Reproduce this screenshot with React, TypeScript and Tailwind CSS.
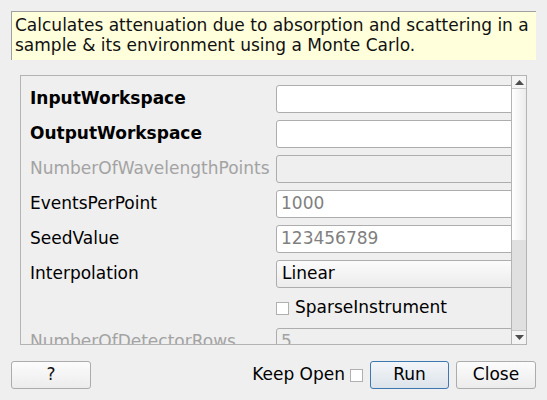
export default function App() {
  const rows: { label: string; kind: "bold" | "normal" | "disabled"; input: "text" | "disabled" | "combo"; value?: string; placeholder?: boolean }[] = [
    { label: "InputWorkspace", kind: "bold", input: "text" },
    { label: "OutputWorkspace", kind: "bold", input: "text" },
    { label: "NumberOfWavelengthPoints", kind: "disabled", input: "disabled" },
    { label: "EventsPerPoint", kind: "normal", input: "text", value: "1000", placeholder: true },
    { label: "SeedValue", kind: "normal", input: "text", value: "123456789", placeholder: true },
    { label: "Interpolation", kind: "normal", input: "combo", value: "Linear" },
  ]

  const labelClass = {
    bold: "font-bold text-black",
    normal: "text-black",
    disabled: "text-[#a3a3a3]",
  }

  return (
    <div className="w-[547px] h-[400px] bg-[#efefef] font-['DejaVu_Sans',sans-serif] text-[17px] text-black pt-[11px] pl-[11px] flex flex-col overflow-hidden">
      {/* description tooltip */}
      <div className="w-[525px] h-[49px] border-l border-t border-[#a0a0a0] bg-[#ffffdc] pl-[3px] pt-[3px] leading-[20px] whitespace-nowrap text-[#111]">
        Calculates attenuation due to absorption and scattering in a
        <br />
        sample &amp; its environment using a Monte Carlo.
      </div>

      {/* property scroll area */}
      <div className="mt-[15px] ml-[9px] w-[507px] h-[270px] border border-[#b4b4b4] flex">
        <div className="flex-1 overflow-hidden pl-[9px] pt-[9px]">
          <div className="grid grid-cols-[246px_260px] gap-y-[7px]">
            {rows.map((row) => (
              <div key={row.label} className="contents">
                <div className={`h-[28px] flex items-center ${labelClass[row.kind]}`}>{row.label}</div>
                {row.input === "combo" ? (
                  <div className="h-[28px] rounded-[3px] border border-[#adadad] bg-gradient-to-b from-[#fbfbfb] to-[#ececec] flex items-center pl-[5px]">
                    {row.value}
                  </div>
                ) : (
                  <div
                    className={`h-[28px] rounded-[3px] border border-[#adadad] flex items-center pl-[4px] ${
                      row.input === "disabled" ? "bg-[#efefef]" : "bg-white"
                    } ${row.placeholder ? "text-[#808080]" : ""}`}
                  >
                    {row.value}
                  </div>
                )}
              </div>
            ))}
            <div className="h-[26px]" />
            <div className="h-[26px] flex items-center gap-[6px]">
              <span className="w-[13px] h-[13px] border border-[#b0b0b0] bg-white" />
              <span>SparseInstrument</span>
            </div>
            <div className="h-[28px] flex items-center text-[#a3a3a3]">NumberOfDetectorRows</div>
            <div className="h-[28px] rounded-[3px] border border-[#adadad] bg-[#efefef] flex items-center pl-[4px] text-[#a3a3a3]">
              5
            </div>
          </div>
        </div>

        {/* scrollbar */}
        <div className="w-[15px] border-l border-[#b4b4b4] flex flex-col">
          <div className="h-[13px] border-b border-[#c8c8c8] bg-[#f4f4f4] flex items-center justify-center">
            <svg width="9" height="5" viewBox="0 0 9 5">
              <path d="M0 5 L4.5 0 L9 5 Z" fill="#4d4d4d" />
            </svg>
          </div>
          <div className="h-[151px] bg-gradient-to-r from-white to-[#ececec]" />
          <div className="flex-1 bg-[#e0e0e0]" />
          <div className="h-[14px] border-t border-[#c8c8c8] bg-[#f4f4f4] flex items-center justify-center">
            <svg width="9" height="5" viewBox="0 0 9 5">
              <path d="M0 0 L9 0 L4.5 5 Z" fill="#4d4d4d" />
            </svg>
          </div>
        </div>
      </div>

      {/* buttons */}
      <div className="mt-[16px] w-[525px] flex items-center">
        <button className="w-[80px] h-[28px] rounded-[3px] border border-[#acacac] bg-gradient-to-b from-[#fcfcfc] to-[#ececec] text-[#111]">
          ?
        </button>
        <div className="ml-auto flex items-center">
          <span>Keep Open</span>
          <span className="ml-[5px] w-[13px] h-[13px] border border-[#b0b0b0] bg-white" />
          <button className="ml-[7px] w-[79px] h-[28px] rounded-[3px] border border-[#3d78b0] bg-gradient-to-b from-[#f3f6f9] to-[#dce3ea]">
            Run
          </button>
          <button className="ml-[7px] w-[80px] h-[28px] rounded-[3px] border border-[#acacac] bg-gradient-to-b from-[#fcfcfc] to-[#ececec]">
            Close
          </button>
        </div>
      </div>
    </div>
  )
}
